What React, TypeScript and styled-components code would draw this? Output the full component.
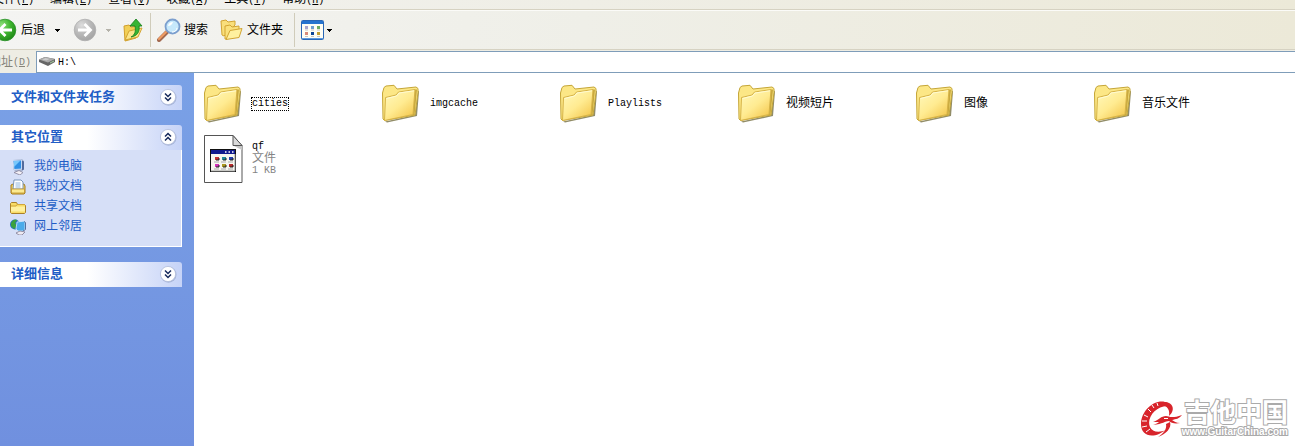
import React from 'react';
import styled, { createGlobalStyle } from 'styled-components';

const GlobalStyle = createGlobalStyle`
  * { box-sizing: border-box; }
  body {
    margin: 0;
    background: #fff;
    font-family: "Liberation Mono", "Noto Sans CJK SC", monospace;
    font-size: 12px;
    line-height: 14px;
    color: #000;
  }
  button, input { font: inherit; color: inherit; }
`;

const Latin = styled.span`
  font-size: 10px;
`;

const Window = styled.div`
  display: flex;
  flex-direction: column;
  min-height: 100vh;
`;

const MenuBar = styled.nav`
  display: flex;
  align-items: flex-end;
  gap: 16px;
  height: 10px;
  padding-bottom: 1px;
  overflow: hidden;
  background: linear-gradient(90deg, #f2f2ef 0%, #efeee6 45%, #ece9d8 100%);
  border-bottom: 1px solid #d6d2c2;
`;

const MenuButton = styled.button`
  flex: none;
  padding: 0;
  border: 0;
  background: none;
  white-space: nowrap;
  &:first-child { margin-left: -8px; }
`;

const ToolBar = styled.div`
  display: flex;
  align-items: center;
  height: 40px;
  background: linear-gradient(90deg, #f4f4f2 0%, #efefe8 45%, #ece9d8 100%);
  border-top: 1px solid #fbfbf8;
  border-bottom: 1px solid #d6d2c2;
`;

const ToolButton = styled.button<{ $gap?: number; $before?: number }>`
  display: flex;
  align-items: center;
  flex: none;
  gap: ${(p) => p.$gap ?? 4}px;
  margin: 0 0 0 ${(p) => p.$before ?? 0}px;
  padding: 0;
  border: 0;
  background: none;
  white-space: nowrap;
  svg { display: block; flex: none; }
`;

const ToolLabel = styled.span`
  padding-top: 1px;
`;

const Separator = styled.div<{ $before?: number }>`
  flex: none;
  width: 1px;
  height: 34px;
  margin: 0 6px 0 ${(p) => p.$before ?? 7}px;
  background: #d0ccba;
`;

const AddressBar = styled.div`
  display: flex;
  height: 23px;
  padding-top: 1px;
  background: #eeede4;
`;

const AddressLabel = styled.label`
  display: flex;
  flex: none;
  align-items: center;
  justify-content: flex-end;
  width: 36px;
  padding: 2px 5px 0 0;
  overflow: hidden;
  white-space: nowrap;
  color: #86847a;
`;

const AddressField = styled.div`
  display: flex;
  flex: 1;
  align-items: center;
  gap: 3px;
  padding-left: 2px;
  background: #fff;
  border: 1px solid #7f9db9;
  border-right: 0;
`;

const AddressInput = styled.input`
  flex: 1;
  min-width: 0;
  padding: 2px 0 0;
  border: 0;
  outline: 0;
  background: none;
  font-size: 10px;
`;

const Body = styled.div`
  display: flex;
  flex: 1;
`;

const SidePane = styled.aside`
  display: flex;
  flex: none;
  flex-direction: column;
  gap: 15px;
  width: 194px;
  padding: 12px 12px 12px 0;
  background: linear-gradient(180deg, #7aa1e6 0%, #7090df 100%);
`;

const PanelHeader = styled.button`
  display: flex;
  align-items: center;
  justify-content: space-between;
  width: 100%;
  height: 25px;
  padding: 0 5px 0 11px;
  border: 0;
  border-radius: 0 3px 0 0;
  background: linear-gradient(90deg, #fff 0%, #fff 48%, #c6d3f7 100%);
  color: #215dc6;
  font-size: 13px;
  font-weight: 700;
  svg { margin-bottom: 2px; }
`;

const PanelBody = styled.ul`
  display: flex;
  flex-direction: column;
  gap: 4px;
  margin: 0;
  padding: 9px 10px 11px;
  list-style: none;
  background: #d6dff7;
  border: solid #fff;
  border-width: 0 1px 1px 0;
`;

const PlaceLink = styled.a`
  display: flex;
  align-items: center;
  gap: 8px;
  height: 16px;
  color: #215dc6;
  text-decoration: none;
`;

const Files = styled.main`
  position: relative;
  flex: 1;
  min-width: 0;
  padding: 7px 0 0 9px;
  background: #fff;
`;

const FileGrid = styled.ul`
  display: grid;
  grid-template-columns: repeat(auto-fill, 178px);
  grid-auto-rows: 48px;
  row-gap: 7px;
  margin: 0;
  padding: 0;
  list-style: none;
`;

const Tile = styled.li`
  display: flex;
  align-items: center;
  gap: 8px;
  line-height: 12px;
  svg { flex: none; }
`;

const FileName = styled.span<{ $latin?: boolean; $focused?: boolean }>`
  border: 1px ${(p) => (p.$focused ? 'dotted #000' : 'solid transparent')};
  font-size: ${(p) => (p.$latin ? 10 : 12)}px;
`;

const FileDetails = styled.div`
  display: flex;
  flex-direction: column;
  padding-left: 1px;
`;

const Detail = styled.span<{ $latin?: boolean; $muted?: boolean }>`
  color: ${(p) => (p.$muted ? '#848484' : '#000')};
  font-size: ${(p) => (p.$latin ? 10 : 12)}px;
`;

const Watermark = styled.a`
  position: absolute;
  right: 7px;
  bottom: 8px;
  display: flex;
  align-items: center;
  color: #fff;
  text-decoration: none;
`;

const WatermarkText = styled.span`
  display: flex;
  flex-direction: column;
  align-items: flex-end;
  font-family: "Liberation Sans", "Noto Sans CJK SC", sans-serif;
  font-weight: 700;
  paint-order: stroke fill;
  -webkit-text-stroke: 2px #aaa;
`;

const WatermarkTitle = styled.span`
  font-size: 26px;
  line-height: 26px;
`;

const WatermarkUrl = styled.span`
  font-size: 10px;
  line-height: 12px;
`;

const Caret = ({ color = '#000' }: { color?: string }) => (
  <svg width="5" height="3" viewBox="0 0 5 3" shapeRendering="crispEdges">
    <path d="M0 0h5v1H4v1H3v1H2V2H1V1H0z" fill={color} />
  </svg>
);

const ArrowDisc = ({ forward }: { forward?: boolean }) => {
  const id = forward ? 'disc-forward' : 'disc-back';
  return (
    <svg width="24" height="24" viewBox="0 0 24 24">
      <defs>
        <radialGradient id={id} cx="35%" cy="28%" r="80%">
          <stop offset="0" stopColor={forward ? '#dedede' : '#8fe07c'} />
          <stop offset=".5" stopColor={forward ? '#b9b9b9' : '#3fb52f'} />
          <stop offset="1" stopColor={forward ? '#a2a2a2' : '#1c8414'} />
        </radialGradient>
      </defs>
      <circle cx="12" cy="12" r="10.800" fill={`url(#${id})`} stroke={forward ? '#b0b0b0' : '#2b922a'} strokeWidth=".8" />
      <g transform={forward ? undefined : 'translate(24 0) scale(-1 1)'} fill="none" stroke="#fff" strokeWidth="2.800">
        <path d="M5 12h12M11.500 6l6 6-6 6" />
      </g>
    </svg>
  );
};

const UpFolderIcon = () => (
  <svg width="21" height="24" viewBox="0 0 21 24">
    <path d="M1 8l5-1 2 2 8-1-3 12-11 3z" fill="#f2cf56" stroke="#d19f2c" />
    <path d="M2 22l4-9 13-3-4 9z" fill="#fbe58b" stroke="#d3a431" />
    <path d="M8 19c4-2 5-6 4-11H7l6-7 6 7h-3c1 6-2 10-8 11z" fill="#37b534" stroke="#167e1b" strokeWidth=".8" />
  </svg>
);

const SearchIcon = () => (
  <svg width="24" height="24" viewBox="0 0 24 24">
    <path d="M2 22l8-8" stroke="#a26950" strokeWidth="4" strokeLinecap="round" />
    <path d="M2 21l7-7" stroke="#ef9c63" strokeWidth="2" strokeLinecap="round" />
    <circle cx="15.500" cy="8.500" r="7" fill="#c6e8fb" stroke="#7c9fce" strokeWidth="1.800" />
    <path d="M11 8a5 5 0 0 1 5-4c-1 3-3 4-5 4z" fill="#fff" />
    <path d="M20 10a5 5 0 0 1-5 4" fill="none" stroke="#fff" />
  </svg>
);

const FoldersIcon = () => (
  <svg width="23" height="22" viewBox="0 0 23 22">
    <path d="M1 2l5-1 2 2 7-1v4L4 17 2 16z" fill="#f9df7b" stroke="#d2a433" />
    <path d="M5 7l5-1 2 2 7-1v4L7 20 5 20z" fill="#fae17c" stroke="#d2a433" />
    <path d="M6 20.500l4-9 12-2-3 9z" fill="#fff09f" stroke="#d2a433" />
  </svg>
);

const ViewsIcon = () => (
  <svg width="23" height="20" viewBox="0 0 23 20">
    <rect x=".5" y=".5" width="22" height="19" rx="1" fill="#fffef4" stroke="#2a67b5" />
    <path d="M1 1h21v3H1z" fill="#2674cf" />
    <path d="M1 18.500h21" stroke="#5b9ae0" />
    <path d="M4 6h3v3H4z" fill="#a9a5cd" /><path d="M10 6h3v3h-3z" fill="#6f9fd0" /><path d="M16 6h3v3h-3z" fill="#6fae61" />
    <path d="M4 12h3v3H4z" fill="#d88a78" /><path d="M10 12h3v3h-3z" fill="#0e4796" /><path d="M16 12h3v3h-3z" fill="#c5a02f" />
    <path d="M4 10h3M10 10h3M16 10h3M4 16.500h3M10 16.500h3M16 16.500h3" stroke="#c5c5c5" />
  </svg>
);

const DriveIcon = () => (
  <svg width="16" height="12" viewBox="0 0 16 12">
    <path d="M0 3.500L6 1l10 2v3l-7 4-9-4z" fill="#666" />
    <path d="M0 3.500L6 1l10 2-7 3.500z" fill="#aaa" />
    <path d="M3 3.500L6.500 2l4 1-3 1.500z" fill="#ccc" />
    <path d="M11 7l4-2" stroke="#a6d0a0" />
  </svg>
);

const Chevrons = ({ up }: { up?: boolean }) => (
  <svg width="18" height="18" viewBox="0 0 18 18">
    <circle cx="9.500" cy="9.700" r="8" fill="#8f9ec4" opacity=".6" />
    <circle cx="9" cy="9" r="7.600" fill="#fff" stroke="#b3bedb" strokeWidth=".8" />
    <path
      d={up ? 'M6 8.500l3-3 3 3M6 12.500l3-3 3 3' : 'M6 5.500l3 3 3-3M6 9.500l3 3 3-3'}
      fill="none" stroke="#172a5c" strokeWidth="1.500"
    />
  </svg>
);

const ComputerIcon = () => (
  <svg width="16" height="16" viewBox="0 0 16 16">
    <path d="M3 1l9-1 2 2v8l-3 3H6l-3-3z" fill="#a8b5d2" />
    <path d="M3 1.500L11.500 1v9L4 10.500z" fill="#2e8ee5" stroke="#d8e5fa" strokeWidth=".8" />
    <path d="M4 2l6 0-6 6z" fill="#78c7fb" />
    <path d="M12 1.500l2 1v8l-2 1z" fill="#536b9d" />
    <path d="M4 13.500l5-2 4 2-3 2.500z" fill="#f2eff5" stroke="#85819b" strokeWidth=".8" />
  </svg>
);

const DocumentsIcon = () => (
  <svg width="16" height="16" viewBox="0 0 16 16">
    <path d="M1 6l2-1h11l1 2v7l-1 1H2l-1-1z" fill="#f4d35e" stroke="#a67c20" />
    <path d="M4 1h7l2 2v7H3z" fill="#fff" stroke="#7895bb" />
    <path d="M5.500 4h5M5.500 6h5M5.500 8h5" stroke="#77a5d5" strokeWidth=".8" />
    <path d="M1.500 10h13v4h-13z" fill="#fcea90" stroke="#bd922c" strokeWidth=".8" />
  </svg>
);

const SmallFolderIcon = () => (
  <svg width="16" height="16" viewBox="0 0 16 16">
    <path d="M.5 4.500l1-1h5l1 2h7l1 1v7l-1 1h-13l-1-1z" fill="#f8db65" stroke="#a9802a" />
    <path d="M1 7.500h14v5H1z" fill="#fff1a0" />
    <path d="M1 7h5l1-1.500h8" fill="none" stroke="#d2a63d" />
  </svg>
);

const NetworkIcon = () => (
  <svg width="16" height="16" viewBox="0 0 16 16">
    <circle cx="5" cy="5.500" r="5" fill="#2772be" />
    <path d="M1 4c2-4 5-4 6-3L5 4l2 3-3 3-3-3z" fill="#3aa13e" />
    <path d="M7 3l8-1v8l-2 2H8l-2-2z" fill="#4aabea" stroke="#d5e7fb" strokeWidth=".8" />
    <path d="M14 2.500l1.500 1v7L13 12" fill="none" stroke="#536f9e" />
    <path d="M6 14l4-2 5 1-3 3H9z" fill="#eeeaf2" stroke="#817b93" strokeWidth=".8" />
  </svg>
);

const FolderIcon = ({ id }: { id: string }) => (
  <svg width="40" height="40" viewBox="0 0 40 40" aria-hidden="true">
    <defs>
      <linearGradient id={`front-${id}`} x1="0" y1="0" x2=".8" y2="1">
        <stop offset="0" stopColor="#fffac0" />
        <stop offset=".55" stopColor="#ffeb91" />
        <stop offset="1" stopColor="#f4c74d" />
      </linearGradient>
    </defs>
    <path d="M4 37.500L34 31l3-24.500 1 1L36 32 6 38.500z" fill="#777142" opacity=".8" />
    <path d="M1.500 9L3 3.500l2-1.500 8-.7L16 5l19-2 2 1.500v4L34 31 3.500 36.500 2 35z" fill="#fce786" stroke="#c5a638" />
    <path d="M34 5.500l2 0-2.500 26-2 1z" fill="#c7a83e" />
    <path d="M4.500 13.500L15 11l2.500-3L34 5.500 32 30.500 3.500 36.500z" fill={`url(#front-${id})`} stroke="#d6b347" />
    <path d="M5.500 14.500L15.500 12l2.500-3L33 6.800" fill="none" stroke="#fffbd2" />
  </svg>
);

const SWATCHES = ['#c73535', '#238b9b', '#2440ae', '#d336ba', '#aa971d', '#b72929'];

const UnknownFileIcon = () => (
  <svg width="40" height="48" viewBox="0 0 40 48" aria-hidden="true">
    <path d="M1.500.5H30L39 10.500V47.500H1.500z" fill="#fff" stroke="#555" />
    <path d="M30 .5V10.500H39z" fill="#dadada" stroke="#555" />
    <path d="M31 11h8v4z" fill="#c6c6c6" />
    <rect x="7.500" y="14.500" width="25" height="22" fill="#f7f7ef" stroke="#111" />
    <path d="M8 15h24v4H8z" fill="#111b8e" />
    <path d="M22 17h1.500M25.500 17H27M29 17h1.500" stroke="#fff" strokeWidth="1.500" />
    <path d="M8 36h24V19" fill="none" stroke="#989898" />
    {SWATCHES.map((color, i) => {
      const x = 12 + (i % 3) * 7;
      const y = 22 + Math.floor(i / 3) * 7;
      return (
        <g key={color}>
          <path d={`M${x} ${y}h4v3h-4z`} fill={color} />
          <path d={`M${x + 1} ${y + 3}h3v-2`} fill="none" stroke="#222" />
          <path d={`M${x - 1} ${y + 5}h5`} stroke="#aaa" />
        </g>
      );
    })}
  </svg>
);

const GuitarLogo = () => (
  <svg width="42" height="38" viewBox="0 0 42 38" aria-hidden="true">
    <path d="M28 3C17-3 1 9 1 24c0 10 8 14 18 10l7-4c-7 3-14 2-16-3C6 18 16 6 27 6z" fill="#d8242b" />
    <path d="M24 2c9 0 12 8 5 14 1-6-1-10-8-11z" fill="#d8242b" />
    <path d="M13 22c6-2 8-6 13-6 3 0 5 3 16-1-3 4-6 4-10 5 2 1 4 3 8 3-5 1-9 0-11-2-4 0-6 3-16 4 3-1 5-2 6-3z" fill="#d8242b" />
    <path d="M30 22c2 6-4 12-12 15 6-4 9-8 8-13z" fill="#d8242b" />
    <path d="M17 3l1 3M12 5l2 3M8 9l3 3M4 15l4 2M2 21h5M2 27l5-1M6 32l4-3" stroke="#fff" strokeWidth="1" />
    <path d="M24 18.500h4" stroke="#fff" />
  </svg>
);

const MENUS = [
  ['文件', 'F'], ['编辑', 'E'], ['查看', 'V'], ['收藏', 'A'], ['工具', 'T'], ['帮助', 'H'],
];

const PLACES = [
  { name: '我的电脑', Icon: ComputerIcon },
  { name: '我的文档', Icon: DocumentsIcon },
  { name: '共享文档', Icon: SmallFolderIcon },
  { name: '网上邻居', Icon: NetworkIcon },
];

const FOLDERS = [
  { name: 'cities', latin: true, focused: true },
  { name: 'imgcache', latin: true },
  { name: 'Playlists', latin: true },
  { name: '视频短片' },
  { name: '图像' },
  { name: '音乐文件' },
];

export default function App() {
  return (
    <>
      <GlobalStyle />
      <Window>
        <MenuBar>
          {MENUS.map(([name, key]) => (
            <MenuButton key={key}>{name}<Latin>(<u>{key}</u>)</Latin></MenuButton>
          ))}
        </MenuBar>
        <ToolBar>
          <ToolButton $before={-7}><ArrowDisc /><ToolLabel>后退</ToolLabel></ToolButton>
          <ToolButton $before={10} aria-label="后退列表"><Caret /></ToolButton>
          <ToolButton $before={13} aria-label="前进"><ArrowDisc forward /></ToolButton>
          <ToolButton $before={9} aria-label="前进列表"><Caret color="#b5b3aa" /></ToolButton>
          <ToolButton $before={12} aria-label="向上"><UpFolderIcon /></ToolButton>
          <Separator $before={6} />
          <ToolButton $gap={3}><SearchIcon /><ToolLabel>搜索</ToolLabel></ToolButton>
          <ToolButton $before={12}><FoldersIcon /><ToolLabel>文件夹</ToolLabel></ToolButton>
          <Separator $before={11} />
          <ToolButton $gap={3} aria-label="查看"><ViewsIcon /><Caret /></ToolButton>
        </ToolBar>
        <AddressBar>
          <AddressLabel htmlFor="address">地址<Latin>(<u>D</u>)</Latin></AddressLabel>
          <AddressField>
            <DriveIcon />
            <AddressInput id="address" defaultValue="H:\" />
          </AddressField>
        </AddressBar>
        <Body>
          <SidePane>
            <PanelHeader>文件和文件夹任务<Chevrons /></PanelHeader>
            <section>
              <PanelHeader>其它位置<Chevrons up /></PanelHeader>
              <PanelBody>
                {PLACES.map(({ name, Icon }) => (
                  <li key={name}><PlaceLink href="#"><Icon />{name}</PlaceLink></li>
                ))}
              </PanelBody>
            </section>
            <PanelHeader>详细信息<Chevrons /></PanelHeader>
          </SidePane>
          <Files>
            <FileGrid>
              {FOLDERS.map(({ name, latin, focused }) => (
                <Tile key={name}>
                  <FolderIcon id={name} />
                  <FileName $latin={latin} $focused={focused}>{name}</FileName>
                </Tile>
              ))}
              <Tile>
                <UnknownFileIcon />
                <FileDetails>
                  <Detail $latin>qf</Detail>
                  <Detail $muted>文件</Detail>
                  <Detail $latin $muted>1 KB</Detail>
                </FileDetails>
              </Tile>
            </FileGrid>
            <Watermark href="#">
              <GuitarLogo />
              <WatermarkText>
                <WatermarkTitle>吉他中国</WatermarkTitle>
                <WatermarkUrl>www.GuitarChina.com</WatermarkUrl>
              </WatermarkText>
            </Watermark>
          </Files>
        </Body>
      </Window>
    </>
  );
}
